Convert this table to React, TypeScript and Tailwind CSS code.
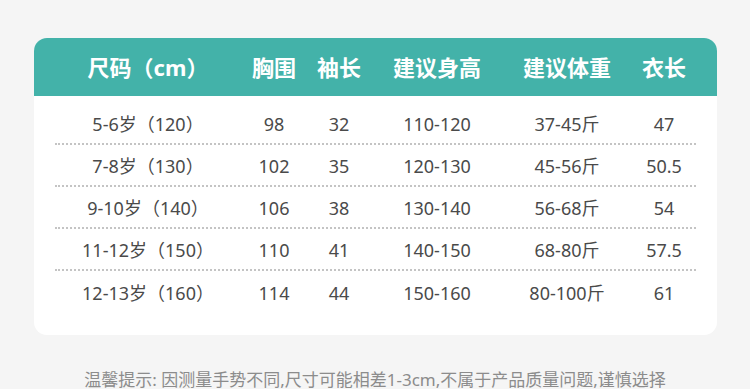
const HEADERS = ['尺码（cm）', '胸围', '袖长', '建议身高', '建议体重', '衣长'];

const ROWS = [
  ['5-6岁（120）', '98', '32', '110-120', '37-45斤', '47'],
  ['7-8岁（130）', '102', '35', '120-130', '45-56斤', '50.5'],
  ['9-10岁（140）', '106', '38', '130-140', '56-68斤', '54'],
  ['11-12岁（150）', '110', '41', '140-150', '68-80斤', '57.5'],
  ['12-13岁（160）', '114', '44', '150-160', '80-100斤', '61'],
];

const cols = 'grid grid-cols-[186px_66px_64px_132px_128px_66px]';

export default function App() {
  return (
    <div
      className="w-[750px] h-[389px] overflow-hidden bg-[#f5f5f5] pt-[38px]"
      style={{ fontFamily: '"Noto Sans", "Noto Sans CJK SC", sans-serif' }}
    >
      <div className="mx-[34px] w-[683px] rounded-[13px] bg-white overflow-hidden pb-[22px]">
        {/* Header */}
        <div className="h-[58px] bg-[#43b2a9] px-[21px] flex items-center">
          <div className={`${cols} w-[641px] -mt-[1px]`}>
            {HEADERS.map((h) => (
              <div key={h} className="flex justify-center whitespace-nowrap text-white text-[22px] font-bold leading-none">
                {h}
              </div>
            ))}
          </div>
        </div>

        {/* Rows */}
        <div className="pt-[7px] px-[21px]">
          {ROWS.map((row, i) => (
            <div
              key={row[0]}
              className={`${cols} w-[641px] h-[42px] items-center pt-[2px] ${
                i < ROWS.length - 1 ? 'border-b-2 border-dotted border-[#c4c4c4]' : ''
              }`}
            >
              {row.map((cell, j) => (
                <div key={j} className="flex justify-center whitespace-nowrap text-[#4a4a4a] text-[18px] leading-none">
                  {cell}
                </div>
              ))}
            </div>
          ))}
        </div>
      </div>

      <p className="mt-[36px] text-center text-[17px] leading-[18px] text-[#8c8c8c] whitespace-nowrap">
        温馨提示: 因测量手势不同,尺寸可能相差1-3cm,不属于产品质量问题,谨慎选择
      </p>
    </div>
  );
}
